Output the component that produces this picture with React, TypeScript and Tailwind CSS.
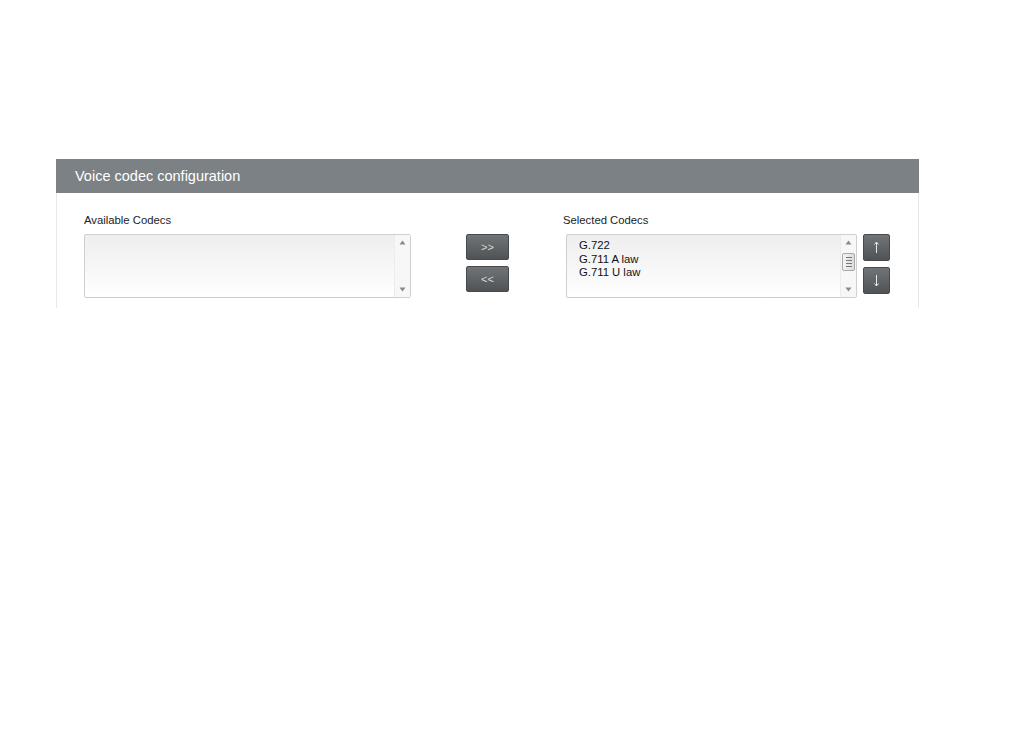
import React from "react";

function ScrollStrip({ thumb }: { thumb?: boolean }) {
  return (
    <div className="flex h-full w-[16px] flex-col items-center border-l border-[#ececec] bg-[#f7f7f7] py-[4px]">
      <svg width="7" height="5" viewBox="0 0 7 5" className="mt-[1px]">
        <path d="M3.5 0.5 L6.5 4.5 L0.5 4.5 Z" fill="#8a8a8a" />
      </svg>
      {thumb ? (
        <div className="mt-[8px] flex h-[18px] w-[13px] flex-col items-center justify-center gap-[2px] rounded-[2px] border border-[#a9a9a9] bg-gradient-to-r from-[#f4f4f4] to-[#dcdcdc]">
          <div className="h-px w-[6px] bg-[#777]" />
          <div className="h-px w-[6px] bg-[#777]" />
          <div className="h-px w-[6px] bg-[#777]" />
          <div className="h-px w-[6px] bg-[#777]" />
        </div>
      ) : null}
      <div className="flex-1" />
      <svg width="7" height="5" viewBox="0 0 7 5" className="mb-[1px]">
        <path d="M0.5 0.5 L6.5 0.5 L3.5 4.5 Z" fill="#8a8a8a" />
      </svg>
    </div>
  );
}

function DarkButton({ children, w, h }: { children: React.ReactNode; w: string; h: string }) {
  return (
    <button
      className={`flex items-center justify-center rounded-[2px] border border-[#474a4c] bg-gradient-to-b from-[#727578] to-[#505355] text-[11px] text-white ${w} ${h}`}
    >
      {children}
    </button>
  );
}

export default function App() {
  return (
    <div className="min-h-[737px] w-[1020px] bg-white pt-[159px] pl-[56px] font-['Liberation_Sans',Arial,sans-serif]">
      <div className="w-[863px]">
        <div className="flex h-[34px] items-center bg-[#7b8184] pt-[2px] pl-[19px] text-[14.5px] text-white">
          Voice codec configuration
        </div>
        <div className="flex border-x border-[#e8e8e8] pt-[20px] pb-[10px] pl-[27px]">
          <div className="flex flex-col">
            <div className="h-[21px] text-[11.3px] leading-[14px] text-[#222]">Available Codecs</div>
            <div className="flex h-[64px] w-[327px] justify-end rounded-[2px] border border-[#cfcfcf] bg-gradient-to-b from-[#eeeeee] to-white">
              <ScrollStrip />
            </div>
          </div>
          <div className="ml-[55px] flex flex-col gap-[6px] pt-[21px]">
            <DarkButton w="w-[43px]" h="h-[26px]">
              <span className="text-[#d8d8d8]">&gt;&gt;</span>
            </DarkButton>
            <DarkButton w="w-[43px]" h="h-[26px]">
              <span className="text-[#d8d8d8]">&lt;&lt;</span>
            </DarkButton>
          </div>
          <div className="ml-[54px] flex flex-col">
            <div className="h-[21px] text-[11.3px] leading-[14px] text-[#222]">Selected Codecs</div>
            <div className="ml-[3px] flex">
              <div className="flex h-[64px] w-[291px] justify-between rounded-[2px] border border-[#cfcfcf] bg-gradient-to-b from-[#eeeeee] to-white">
                <div className="flex flex-col pt-[4px] pl-[12px] text-[11.3px] leading-[13.5px] text-[#111]">
                  <span>G.722</span>
                  <span>G.711 A law</span>
                  <span>G.711 U law</span>
                </div>
                <ScrollStrip thumb />
              </div>
              <div className="ml-[6px] flex flex-col gap-[6px]">
                <DarkButton w="w-[27px]" h="h-[27px]">
                  <svg width="7" height="13" viewBox="0 0 7 13">
                    <path d="M3.5 1 L3.5 12" stroke="#e8e8e8" strokeWidth="1" />
                    <path d="M1.5 3.5 L3.5 1 L5.5 3.5" stroke="#e8e8e8" strokeWidth="1" fill="none" />
                  </svg>
                </DarkButton>
                <DarkButton w="w-[27px]" h="h-[27px]">
                  <svg width="7" height="13" viewBox="0 0 7 13">
                    <path d="M3.5 1 L3.5 12" stroke="#e8e8e8" strokeWidth="1" />
                    <path d="M1.5 9.5 L3.5 12 L5.5 9.5" stroke="#e8e8e8" strokeWidth="1" fill="none" />
                  </svg>
                </DarkButton>
              </div>
            </div>
          </div>
        </div>
      </div>
    </div>
  );
}
